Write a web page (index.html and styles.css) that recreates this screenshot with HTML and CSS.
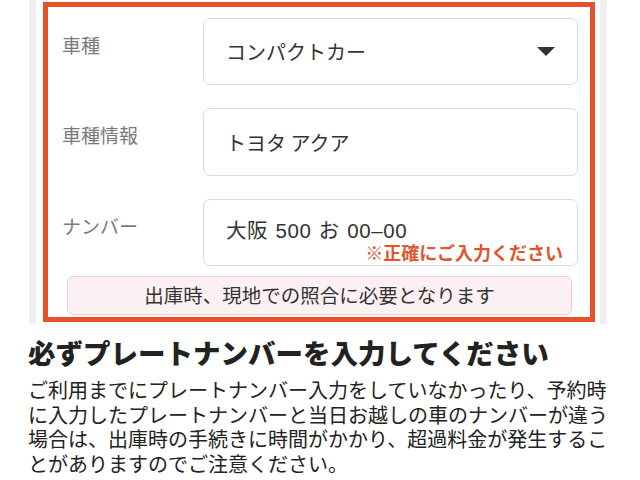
FILE: index.html
```html
<!DOCTYPE html>
<html lang="ja">

<head>
    <meta charset="UTF-8">
    <meta name="viewport" content="width=device-width, initial-scale=1.0">
    <title>車両情報</title>
    <link rel="stylesheet" href="styles.css">
</head>

<body>
    <div class="card">
        <div class="highlight">
            <div class="rows">
                <div class="label">車種</div>
                <div class="field">
                    <span>コンパクトカー</span>
                    <span class="arrow"></span>
                </div>

                <div class="label">車種情報</div>
                <div class="field">
                    <span>トヨタ アクア</span>
                </div>

                <div class="label">ナンバー</div>
                <div class="field plate">
                    <div class="plate-value">大阪 500 お 00–00</div>
                    <div class="hint">※正確にご入力ください</div>
                </div>
            </div>

            <div class="notice">出庫時、現地での照合に必要となります</div>
        </div>
    </div>

    <h2 class="title">必ずプレートナンバーを入力してください</h2>
    <p class="desc">
        ご利用までにプレートナンバー入力をしていなかったり、予約時に入力したプレートナンバーと当日お越しの車のナンバーが違う場合は、出庫時の手続きに時間がかかり、超過料金が発生することがありますのでご注意ください。
    </p>
</body>

</html>
```

FILE: styles.css
```css
* {
    box-sizing: border-box;
    font-family: 'Noto Sans CJK JP', 'Noto Sans', sans-serif;
    color: #333;
}

body {
    margin: 0;
    background-color: #fff;
}

.card {
    width: 578px;
    margin-left: 29px;
    padding: 2px 5px 2px 7px;
    border-left: 7px solid #efeff3;
    border-right: 7px solid #efeff3;
}

.highlight {
    border: 5px solid #e8502a;
    padding: 11px 12px 2px 14px;
}

.rows {
    display: grid;
    grid-template-columns: 141px 1fr;
    grid-template-rows: 67px 68px 67px;
    row-gap: 23px;
}

.rows .field:nth-of-type(3) {
    margin-top: 1px;
}

.label {
    padding-top: 16px;
    font-size: 19px;
    line-height: 22px;
    color: #7a7a7e;
}

.field {
    display: flex;
    align-items: center;
    padding: 0 22px;
    border: 1px solid #dcdce0;
    border-radius: 7px;
    font-size: 20px;
    background-color: #fff;
}

.field span {
    color: #333;
}

.arrow {
    margin-left: auto;
    width: 0;
    height: 0;
    border-left: 9px solid transparent;
    border-right: 9px solid transparent;
    border-top: 9px solid #333;
}

.plate {
    display: block;
    padding-top: 20px;
}

.plate-value {
    font-family: 'Liberation Sans', 'Noto Sans CJK JP', sans-serif;
    font-size: 20.5px;
    line-height: 22px;
    letter-spacing: 0.6px;
    word-spacing: 1px;
}

.hint {
    margin-right: -8px;
    text-align: right;
    font-size: 18px;
    font-weight: 700;
    line-height: 20px;
    color: #e0552d;
}

.notice {
    margin: 10px 6px 0 5px;
    height: 39px;
    border: 1px solid #f1cdd5;
    border-radius: 6px;
    background-color: #fdf0f3;
    text-align: center;
    font-size: 19.5px;
    line-height: 36px;
}

.title {
    margin: 10px 0 0 28px;
    font-size: 27.5px;
    font-weight: 900;
    line-height: 36px;
    color: #222;
}

.desc {
    width: 584px;
    margin: 8px 0 0 28px;
    font-size: 20px;
    line-height: 24.5px;
    color: #222;
}
```
